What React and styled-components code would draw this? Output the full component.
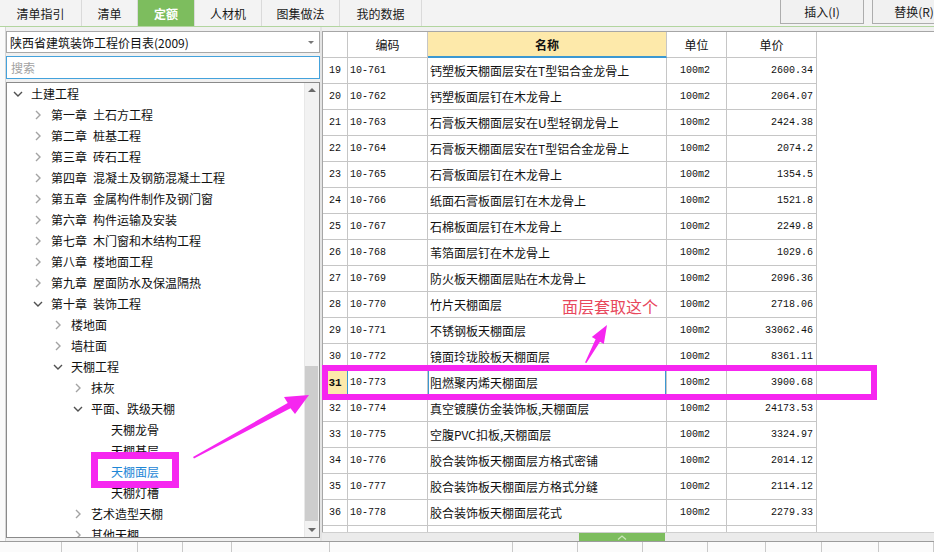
import React from 'react';
import styled, { createGlobalStyle } from 'styled-components';

const GlobalStyle = createGlobalStyle`
  html, body { margin: 0; padding: 0; }
  body {
    font-family: "Noto Sans CJK SC", "Liberation Sans", sans-serif;
    font-size: 12px;
    color: #111;
    background: #f0f0f0;
  }
  * { box-sizing: border-box; }
`;

const MAGENTA = '#f626f0';
const GRID = '#c6c6c6';

const Page = styled.div`
  position: relative;
  width: 934px;
  height: 552px;
  overflow: hidden;
  display: flex;
  flex-direction: column;
  background: #f0f0f0;
`;

/* ---------- top tab bar ---------- */
const TopBar = styled.div`
  height: 27px;
  flex: none;
  display: flex;
  align-items: stretch;
  background: #f3f3f3;
  border-bottom: 1px solid #b2d59f;
  overflow: hidden;
`;

const Tab = styled.div`
  width: ${p => p.$w}px;
  display: flex;
  align-items: center;
  justify-content: center;
  border-right: 1px solid #dadada;
  font-size: 12px;
  color: ${p => (p.$active ? '#fff' : '#1a1a1a')};
  font-weight: ${p => (p.$active ? 700 : 400)};
  background: ${p => (p.$active ? '#7dbd5e' : 'transparent')};
`;

const Actions = styled.div`
  margin-left: auto;
  margin-right: -22px;
  display: flex;
  gap: 8px;
  align-items: flex-start;
`;

const ActionButton = styled.div`
  width: 84px;
  height: 24px;
  border: 1px solid #adadad;
  border-top: none;
  background: #f1f1f1;
  display: flex;
  align-items: center;
  justify-content: center;
  font-size: 12px;
  color: #1a1a1a;
`;

/* ---------- main ---------- */
const Main = styled.div`
  flex: 1;
  display: flex;
  min-height: 0;
`;

const LeftEdge = styled.div`
  width: 6px;
  flex: none;
  background: #fafafa;
  border-right: 1px solid #d6d6d6;
`;

const LeftPanel = styled.div`
  width: 314px;
  flex: none;
  display: flex;
  flex-direction: column;
  padding-top: 4px;
`;

const Select = styled.div`
  height: 22px;
  border: 1px solid #a8a8a8;
  background: #fff;
  display: flex;
  align-items: center;
  justify-content: space-between;
  padding: 0 5px 0 3px;
  font-size: 12px;
`;

const SelectArrow = styled.span`
  width: 0;
  height: 0;
  border-left: 3px solid transparent;
  border-right: 3px solid transparent;
  border-top: 3px solid #777;
`;

const Search = styled.div`
  margin-top: 3px;
  height: 23px;
  border: 1px solid #44a2dc;
  background: #fff;
  display: flex;
  align-items: center;
  padding-left: 4px;
  color: #a2a2a2;
  font-size: 12px;
`;

const TreeBox = styled.div`
  margin-top: 3px;
  height: 456px;
  border: 1px solid #8a8a8a;
  background: #fff;
  display: flex;
`;

const TreeList = styled.div`
  flex: 1;
  overflow: hidden;
`;

const TreeRow = styled.div`
  height: 21px;
  display: flex;
  align-items: center;
  padding-left: ${p => p.$level * 20}px;
  white-space: nowrap;
  color: ${p => (p.$selected ? '#1d86d6' : '#111')};
  font-size: 12px;
`;

const Toggle = styled.span`
  width: 21px;
  margin-right: 3px;
  display: flex;
  justify-content: center;
  align-items: center;
  flex: none;
`;

const Chapter = styled.span`
  margin-right: 6px;
`;

const ScrollBar = styled.div`
  width: 15px;
  flex: none;
  display: flex;
  flex-direction: column;
  background: #f2f2f2;
  border-left: 1px solid #e8e8e8;
`;

const ScrollArrow = styled.div`
  height: 14px;
  display: flex;
  align-items: center;
  justify-content: center;
  &::after {
    content: '';
    width: 0;
    height: 0;
    border-left: 4px solid transparent;
    border-right: 4px solid transparent;
    ${p => (p.$down ? 'border-top: 4px solid #6a6a6a;' : 'border-bottom: 4px solid #6a6a6a;')}
  }
`;

const ScrollTrack = styled.div`
  flex: 1;
  display: flex;
  flex-direction: column;
  justify-content: flex-end;
  padding: 0 1px 2px 0;
`;

const ScrollThumb = styled.div`
  height: 155px;
  background: #cdcdcd;
`;

const Splitter = styled.div`
  width: 2px;
  flex: none;
  background: #e4e4e4;
`;

const RightPanel = styled.div`
  flex: 1;
  display: flex;
  flex-direction: column;
  padding-top: 4px;
  min-width: 0;
`;

const GridArea = styled.div`
  height: 501px;
  flex: none;
  background: #fff;
  border-top: 1px solid #a6a6a6;
  border-left: 1px solid #a6a6a6;
  overflow: hidden;
`;

const Table = styled.div`
  width: 494px;
  display: grid;
  grid-template-columns: 25px 80px 239px 60px 90px;
  grid-auto-rows: 26px;
`;

const HeadCell = styled.div`
  display: flex;
  align-items: center;
  justify-content: center;
  border-right: 1px solid ${GRID};
  border-bottom: ${p => (p.$active ? '2px solid #3b98d2' : `1px solid ${GRID}`)};
  background: ${p => (p.$active ? '#fde9aa' : '#fff')};
  font-weight: ${p => (p.$active ? 700 : 400)};
  font-size: 12px;
  color: #111;
`;

const Cell = styled.div`
  display: flex;
  align-items: center;
  justify-content: ${p => (p.$align === 'right' ? 'flex-end' : p.$align === 'center' ? 'center' : 'flex-start')};
  padding: 0 3px 0 ${p => (p.$align === 'left' ? '2px' : '0')};
  border-right: 1px solid ${GRID};
  border-bottom: 1px solid ${GRID};
  font-family: ${p => (p.$mono ? '"Liberation Mono", "DejaVu Sans Mono", monospace' : '"Noto Sans CJK SC", "Liberation Sans", sans-serif')};
  font-size: ${p => (p.$mono ? '10px' : '12px')};
  white-space: nowrap;
  overflow: hidden;
  color: #111;
`;

const RowNum = styled(Cell)`
  justify-content: center;
  padding: 0;
  background: ${p => (p.$current ? '#fde9aa' : '#fff')};
  font-weight: ${p => (p.$current ? 700 : 400)};
  font-size: ${p => (p.$current ? '11px' : '10px')};
  border-right-color: ${p => (p.$current ? '#3b98d2' : GRID)};
`;

const NameCell = styled(Cell)`
  box-shadow: ${p => (p.$current ? 'inset 0 0 0 1px #3b98d2' : 'none')};
`;

const BottomBand = styled.div`
  height: 9px;
  flex: none;
  background: #ebebeb;
  border-top: 1px solid #cfcfcf;
  padding-left: 257px;
  display: flex;
`;

const GreenTab = styled.div`
  width: 86px;
  height: 8px;
  background: #7dbd5e;
  display: flex;
  justify-content: center;
  align-items: center;
`;

const BottomStrip = styled.div`
  height: 11px;
  flex: none;
  background: #fbfbfb;
  border-top: 1px solid #9c9c9c;
  display: grid;
  grid-template-columns: 62px 76px 45px 49px 98px 183px 65px 65px 65px 58px 56px 57px 1fr;
`;

const StripCell = styled.div`
  border-right: 1px solid #c9c9c9;
`;

/* ---------- annotations (overlay) ---------- */
const MarkBox = styled.div`
  position: absolute;
  left: ${p => p.$x}px;
  top: ${p => p.$y}px;
  width: ${p => p.$w}px;
  height: ${p => p.$h}px;
  border: ${p => p.$t}px solid ${MAGENTA};
  pointer-events: none;
`;

const Callout = styled.div`
  position: absolute;
  left: 562px;
  top: 294px;
  font-size: 16px;
  color: #e8485c;
  white-space: nowrap;
  pointer-events: none;
`;

const ArrowLayer = styled.svg`
  position: absolute;
  left: 0;
  top: 0;
  pointer-events: none;
`;

/* ---------- data ---------- */
const tabs = [
  { label: '清单指引', w: 82 },
  { label: '清单', w: 56 },
  { label: '定额', w: 57, active: true },
  { label: '人材机', w: 67 },
  { label: '图集做法', w: 78 },
  { label: '我的数据', w: 82 },
];

const tree = [
  { level: 0, label: '土建工程', state: 'open' },
  { level: 1, ch: '第一章', label: '土石方工程', state: 'closed' },
  { level: 1, ch: '第二章', label: '桩基工程', state: 'closed' },
  { level: 1, ch: '第三章', label: '砖石工程', state: 'closed' },
  { level: 1, ch: '第四章', label: '混凝土及钢筋混凝土工程', state: 'closed' },
  { level: 1, ch: '第五章', label: '金属构件制作及钢门窗', state: 'closed' },
  { level: 1, ch: '第六章', label: '构件运输及安装', state: 'closed' },
  { level: 1, ch: '第七章', label: '木门窗和木结构工程', state: 'closed' },
  { level: 1, ch: '第八章', label: '楼地面工程', state: 'closed' },
  { level: 1, ch: '第九章', label: '屋面防水及保温隔热', state: 'closed' },
  { level: 1, ch: '第十章', label: '装饰工程', state: 'open' },
  { level: 2, label: '楼地面', state: 'closed' },
  { level: 2, label: '墙柱面', state: 'closed' },
  { level: 2, label: '天棚工程', state: 'open' },
  { level: 3, label: '抹灰', state: 'closed' },
  { level: 3, label: '平面、跌级天棚', state: 'open' },
  { level: 4, label: '天棚龙骨' },
  { level: 4, label: '天棚基层' },
  { level: 4, label: '天棚面层', selected: true },
  { level: 4, label: '天棚灯槽' },
  { level: 3, label: '艺术造型天棚', state: 'closed' },
  { level: 3, label: '其他天棚', state: 'closed' },
];

const rows = [
  ['19', '10-761', '钙塑板天棚面层安在T型铝合金龙骨上', '2600.34'],
  ['20', '10-762', '钙塑板面层钉在木龙骨上', '2064.07'],
  ['21', '10-763', '石膏板天棚面层安在U型轻钢龙骨上', '2424.38'],
  ['22', '10-764', '石膏板天棚面层安在T型铝合金龙骨上', '2074.2'],
  ['23', '10-765', '石膏板面层钉在木龙骨上', '1354.5'],
  ['24', '10-766', '纸面石膏板面层钉在木龙骨上', '1521.8'],
  ['25', '10-767', '石棉板面层钉在木龙骨上', '2249.8'],
  ['26', '10-768', '苇箔面层钉在木龙骨上', '1029.6'],
  ['27', '10-769', '防火板天棚面层贴在木龙骨上', '2096.36'],
  ['28', '10-770', '竹片天棚面层', '2718.06'],
  ['29', '10-771', '不锈钢板天棚面层', '33062.46'],
  ['30', '10-772', '镜面玲珑胶板天棚面层', '8361.11'],
  ['31', '10-773', '阻燃聚丙烯天棚面层', '3900.68'],
  ['32', '10-774', '真空镀膜仿金装饰板,天棚面层', '24173.53'],
  ['33', '10-775', '空腹PVC扣板,天棚面层', '3324.97'],
  ['34', '10-776', '胶合装饰板天棚面层方格式密铺', '2014.12'],
  ['35', '10-777', '胶合装饰板天棚面层方格式分缝', '2114.12'],
  ['36', '10-778', '胶合装饰板天棚面层花式', '2279.33'],
];

const ChevronRight = () => (
  <svg width="6" height="10" viewBox="0 0 6 10">
    <polyline points="1,1 5,5 1,9" fill="none" stroke="#a3a3a3" strokeWidth="1.4" />
  </svg>
);

const ChevronDown = () => (
  <svg width="10" height="6" viewBox="0 0 10 6">
    <polyline points="1,1 5,5 9,1" fill="none" stroke="#505050" strokeWidth="1.4" />
  </svg>
);

export default function App() {
  return (
    <>
      <GlobalStyle />
      <Page>
        <TopBar>
          {tabs.map(t => (
            <Tab key={t.label} $w={t.w} $active={t.active}>{t.label}</Tab>
          ))}
          <Actions>
            <ActionButton>插入(I)</ActionButton>
            <ActionButton>替换(R)</ActionButton>
          </Actions>
        </TopBar>

        <Main>
          <LeftEdge />
          <LeftPanel>
            <Select>
              <span>陕西省建筑装饰工程价目表(2009)</span>
              <SelectArrow />
            </Select>
            <Search>搜索</Search>
            <TreeBox>
              <TreeList>
                {tree.map((n, i) => (
                  <TreeRow key={i} $level={n.level} $selected={n.selected}>
                    <Toggle>
                      {n.state === 'open' && <ChevronDown />}
                      {n.state === 'closed' && <ChevronRight />}
                    </Toggle>
                    {n.ch && <Chapter>{n.ch}</Chapter>}
                    <span>{n.label}</span>
                  </TreeRow>
                ))}
              </TreeList>
              <ScrollBar>
                <ScrollArrow />
                <ScrollTrack>
                  <ScrollThumb />
                </ScrollTrack>
                <ScrollArrow $down />
              </ScrollBar>
            </TreeBox>
          </LeftPanel>
          <Splitter />
          <RightPanel>
            <GridArea>
              <Table>
                <HeadCell />
                <HeadCell>编码</HeadCell>
                <HeadCell $active>名称</HeadCell>
                <HeadCell>单位</HeadCell>
                <HeadCell>单价</HeadCell>
                {rows.map(r => {
                  const cur = r[0] === '31';
                  return (
                    <React.Fragment key={r[0]}>
                      <RowNum $mono $current={cur}>{r[0]}</RowNum>
                      <Cell $mono $align="left">{r[1]}</Cell>
                      <NameCell $align="left" $current={cur}>{r[2]}</NameCell>
                      <Cell $mono $align="center">100m2</Cell>
                      <Cell $mono $align="right">{r[3]}</Cell>
                    </React.Fragment>
                  );
                })}
                <RowNum />
                <Cell />
                <Cell />
                <Cell />
                <Cell />
              </Table>
            </GridArea>
            <BottomBand>
              <GreenTab>
                <svg width="10" height="5" viewBox="0 0 10 5">
                  <polyline points="1,4.5 5,1 9,4.5" fill="none" stroke="#c9e6b9" strokeWidth="1.3" />
                </svg>
              </GreenTab>
            </BottomBand>
          </RightPanel>
        </Main>

        <BottomStrip>
          {Array.from({ length: 13 }).map((_, i) => (
            <StripCell key={i} />
          ))}
        </BottomStrip>

        {/* annotations */}
        <MarkBox $x={91} $y={452} $w={88} $h={36} $t={7} />
        <MarkBox $x={322} $y={365} $w={555} $h={35} $t={6} />
        <Callout>面层套取这个</Callout>
        <ArrowLayer width="934" height="552" viewBox="0 0 934 552">
          <polygon
            points="193,457 287.7,403.1 284,397 309,395 295,414 290.5,408.3 194,458.5"
            fill={MAGENTA}
          />
          <polygon
            points="585,362.5 595.6,339.2 591.8,336.9 607,325 603.8,344.1 600,341.8 586.4,363"
            fill={MAGENTA}
          />
        </ArrowLayer>
      </Page>
    </>
  );
}
